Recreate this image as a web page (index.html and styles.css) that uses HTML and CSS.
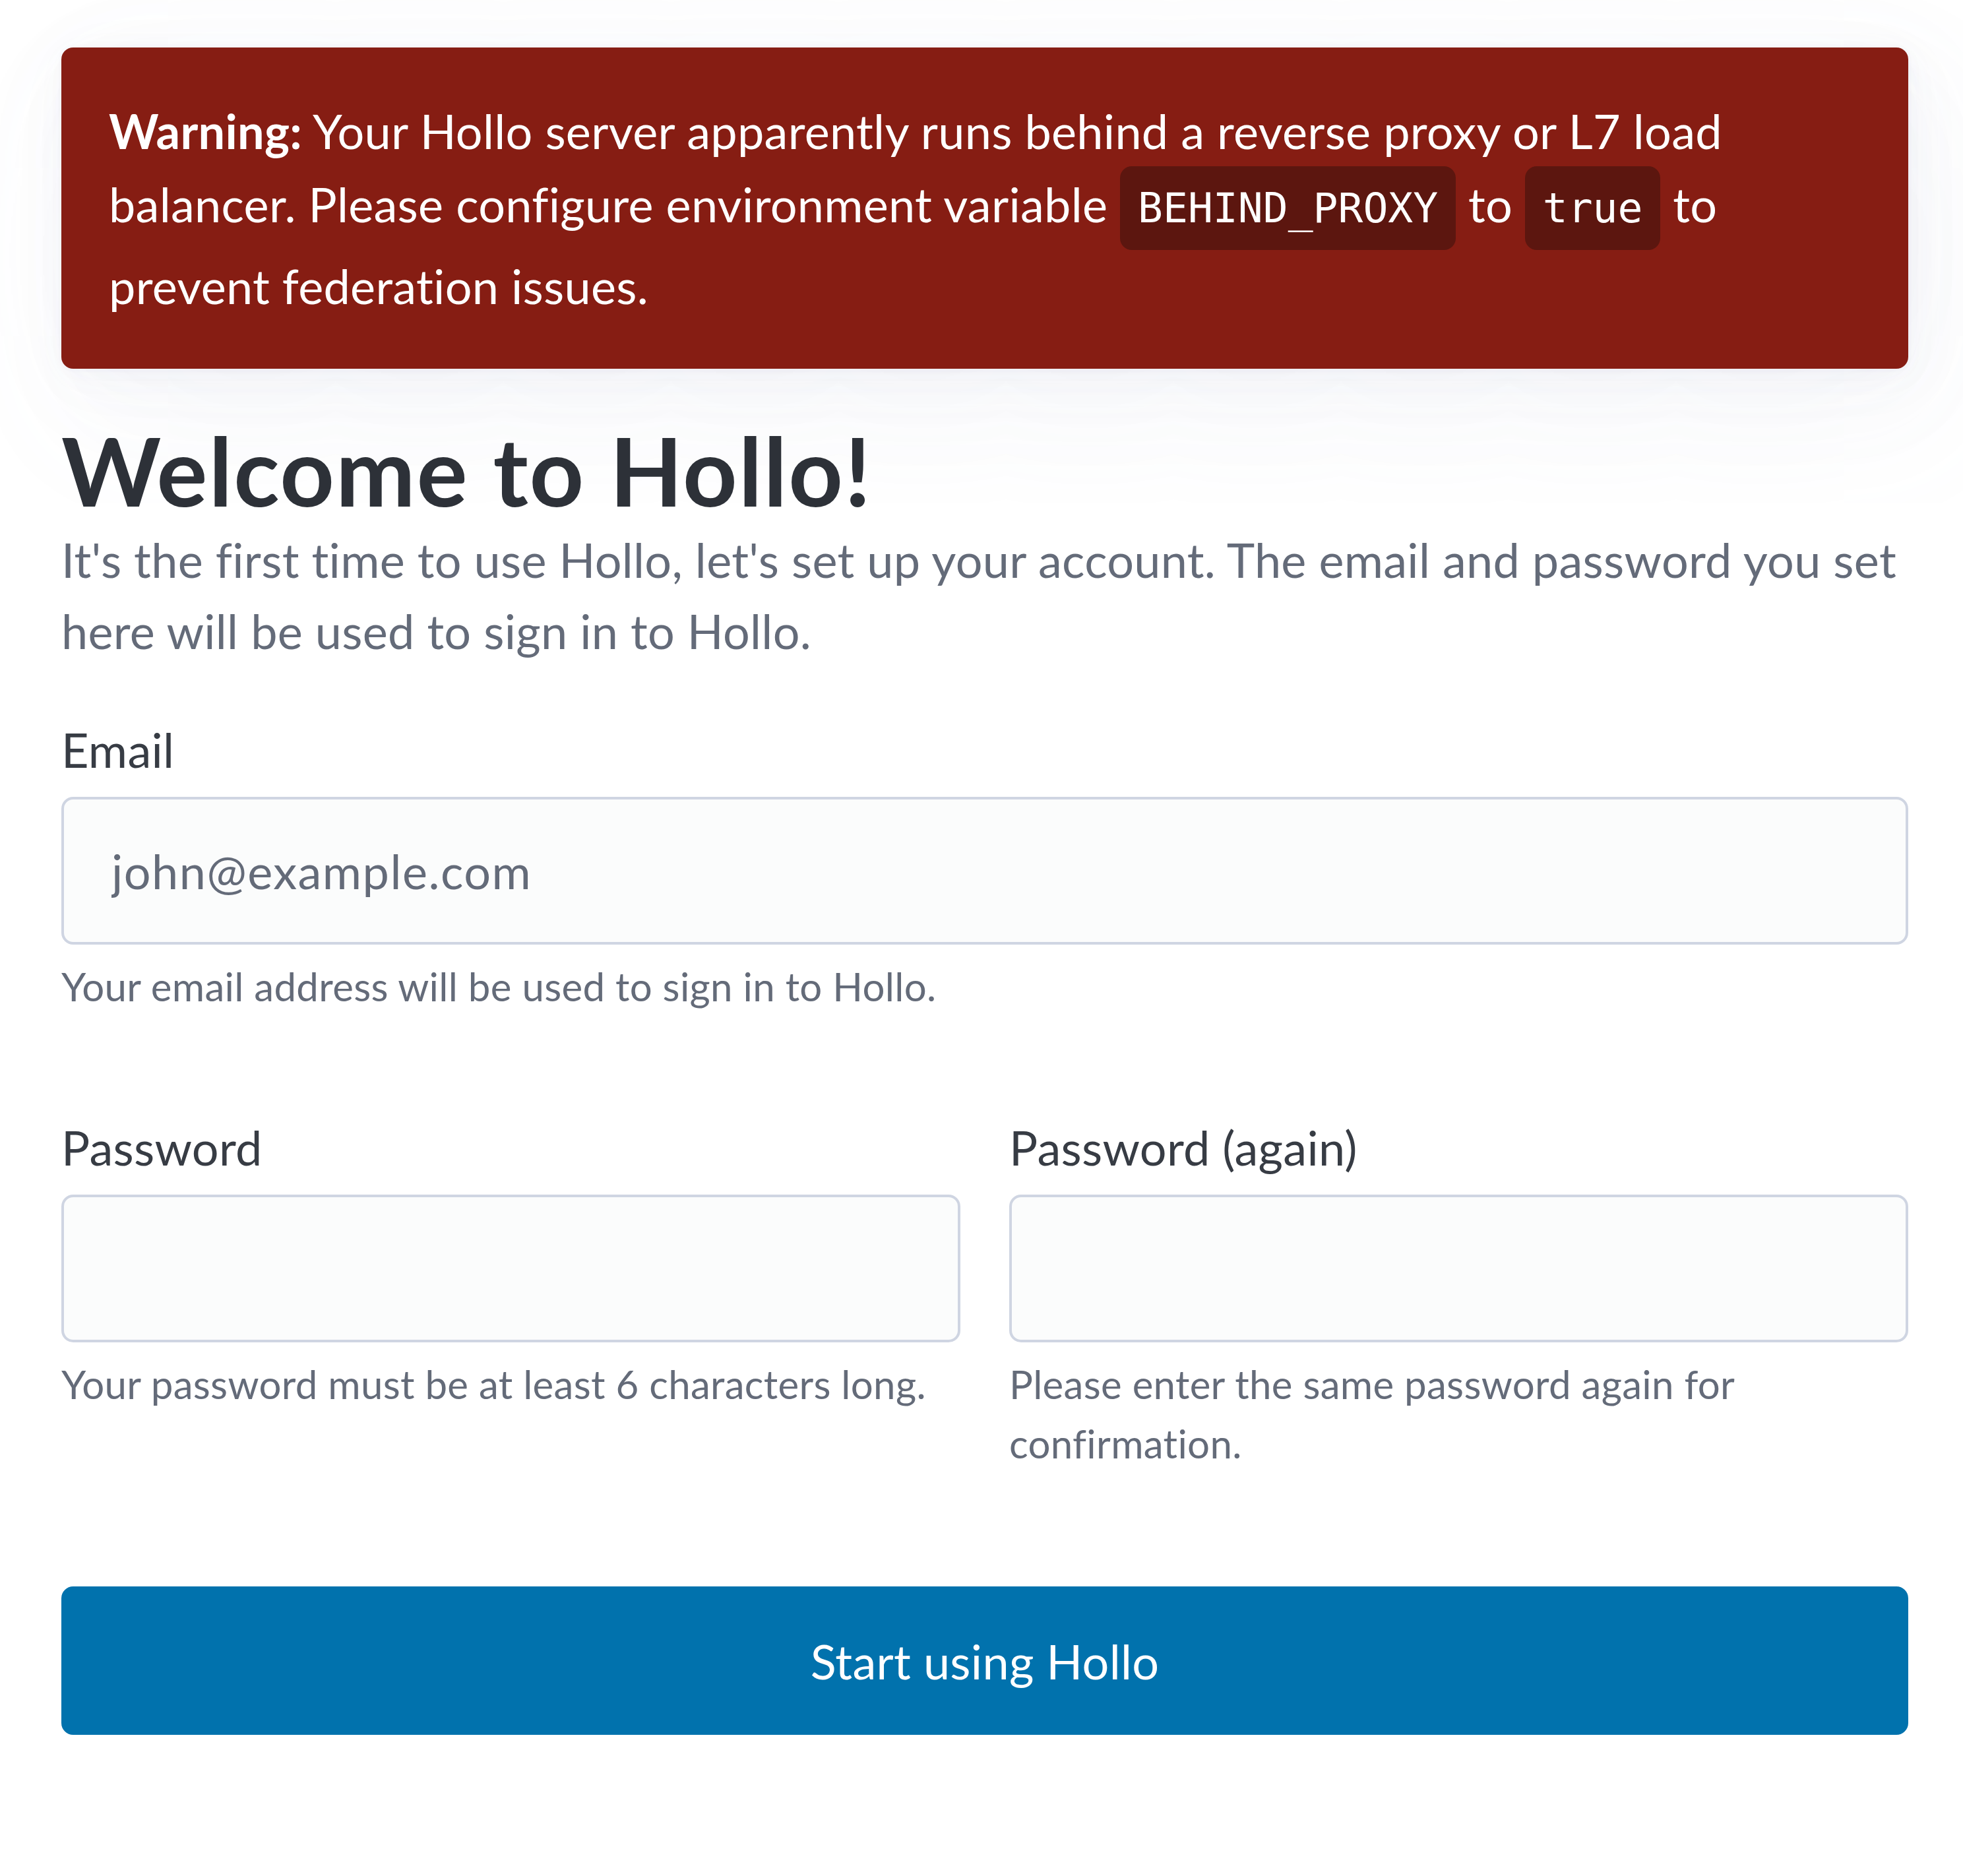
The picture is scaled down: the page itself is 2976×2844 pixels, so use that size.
FILE: index.html
```html
<!DOCTYPE html>
<html lang="en">
<head>
<meta charset="utf-8">
<title>Hollo – Setup</title>
<link rel="stylesheet" href="styles.css">
</head>
<body>
<main class="page">
  <article class="warning">
    <p><strong>Warning:</strong> Your Hollo server apparently runs behind a reverse proxy or L7 load balancer. Please configure environment variable <code class="code">BEHIND_PROXY</code> to <code class="code">true</code> to prevent federation issues.</p>
  </article>
  <hgroup class="intro">
    <h1 class="title">Welcome to Hollo!</h1>
    <p class="lead">It's the first time to use Hollo, let's set up your account. The email and password you set here will be used to sign in to Hollo.</p>
  </hgroup>
  <form class="setup" method="post">
    <div class="field field-email">
      <label class="label" for="email">Email</label>
      <input class="input" type="email" id="email" name="email" placeholder="john@example.com">
      <small class="help">Your email address will be used to sign in to Hollo.</small>
    </div>
    <div class="row">
      <div class="field">
        <label class="label" for="password">Password</label>
        <input class="input" type="password" id="password" name="password">
        <small class="help">Your password must be at least 6 characters long.</small>
      </div>
      <div class="field">
        <label class="label" for="password-confirm">Password (again)</label>
        <input class="input" type="password" id="password-confirm" name="password_confirm">
        <small class="help">Please enter the same password again for confirmation.</small>
      </div>
    </div>
    <button class="submit" type="submit">Start using Hollo</button>
  </form>
</main>
</body>
</html>
```
FILE: styles.css
```css
* {
  box-sizing: border-box;
}

html,
body {
  margin: 0;
  background: #ffffff;
}

body {
  font-family: Lato, "Noto Sans", sans-serif;
  font-size: 72px;
  line-height: 108px;
  letter-spacing: 0.3px;
  font-variant-ligatures: none;
  color: #373c44;
}

.page {
  width: 2800px;
  margin-left: 93px;
  padding-top: 72px;
}

.warning {
  margin: 0 0 73px;
  padding: 72px;
  border-radius: 18px;
  background: #861d13;
  color: #ffffff;
  box-shadow:
    1px 2px 12.5px rgba(129, 145, 181, 0.017),
    2.4px 4.8px 29px rgba(129, 145, 181, 0.024),
    4.5px 9px 54px rgba(129, 145, 181, 0.03),
    8px 16px 97px rgba(129, 145, 181, 0.036),
    15px 30px 180px rgba(129, 145, 181, 0.043),
    36px 72px 432px rgba(129, 145, 181, 0.06),
    0 0 0 4.5px rgba(129, 145, 181, 0.015);
}

.warning p {
  margin: 0;
}

.warning strong {
  font-weight: 700;
}

.code {
  display: inline-block;
  padding: 27px;
  border-radius: 18px;
  background: #5c160f;
  color: #ffffff;
  font-family: "DejaVu Sans Mono", monospace;
  font-size: 63px;
  line-height: normal;
  letter-spacing: 0;
}

.intro {
  margin: 0 0 72px;
}

.title {
  margin: 0;
  font-size: 144px;
  line-height: 162px;
  font-weight: 700;
  letter-spacing: 2px;
  color: #2d3138;
}

.lead {
  margin: 0;
  color: #646b79;
}

.setup {
  margin: 0;
}

.field-email {
  margin-bottom: 145px;
}

.label {
  display: block;
  margin-bottom: 18px;
  color: #373c44;
}

.input {
  display: block;
  width: 100%;
  height: 224px;
  margin: 0 0 18px;
  padding: 54px 72px;
  border: 4px solid #cfd5e2;
  border-radius: 18px;
  background: #fbfcfc;
  color: #373c44;
  font: inherit;
  letter-spacing: 1.5px;
  outline: none;
}

.input::placeholder {
  color: #646b79;
  opacity: 1;
}

.help {
  display: block;
  font-size: 60px;
  line-height: 90px;
  color: #646b79;
}

.row {
  display: grid;
  grid-template-columns: 1fr 1fr;
  column-gap: 74px;
  margin-bottom: 172px;
}

.submit {
  display: block;
  width: 100%;
  height: 225px;
  padding: 54px 72px;
  border: 4px solid #0172ad;
  border-radius: 18px;
  background: #0172ad;
  color: #ffffff;
  font: inherit;
  letter-spacing: inherit;
  cursor: pointer;
}
```
